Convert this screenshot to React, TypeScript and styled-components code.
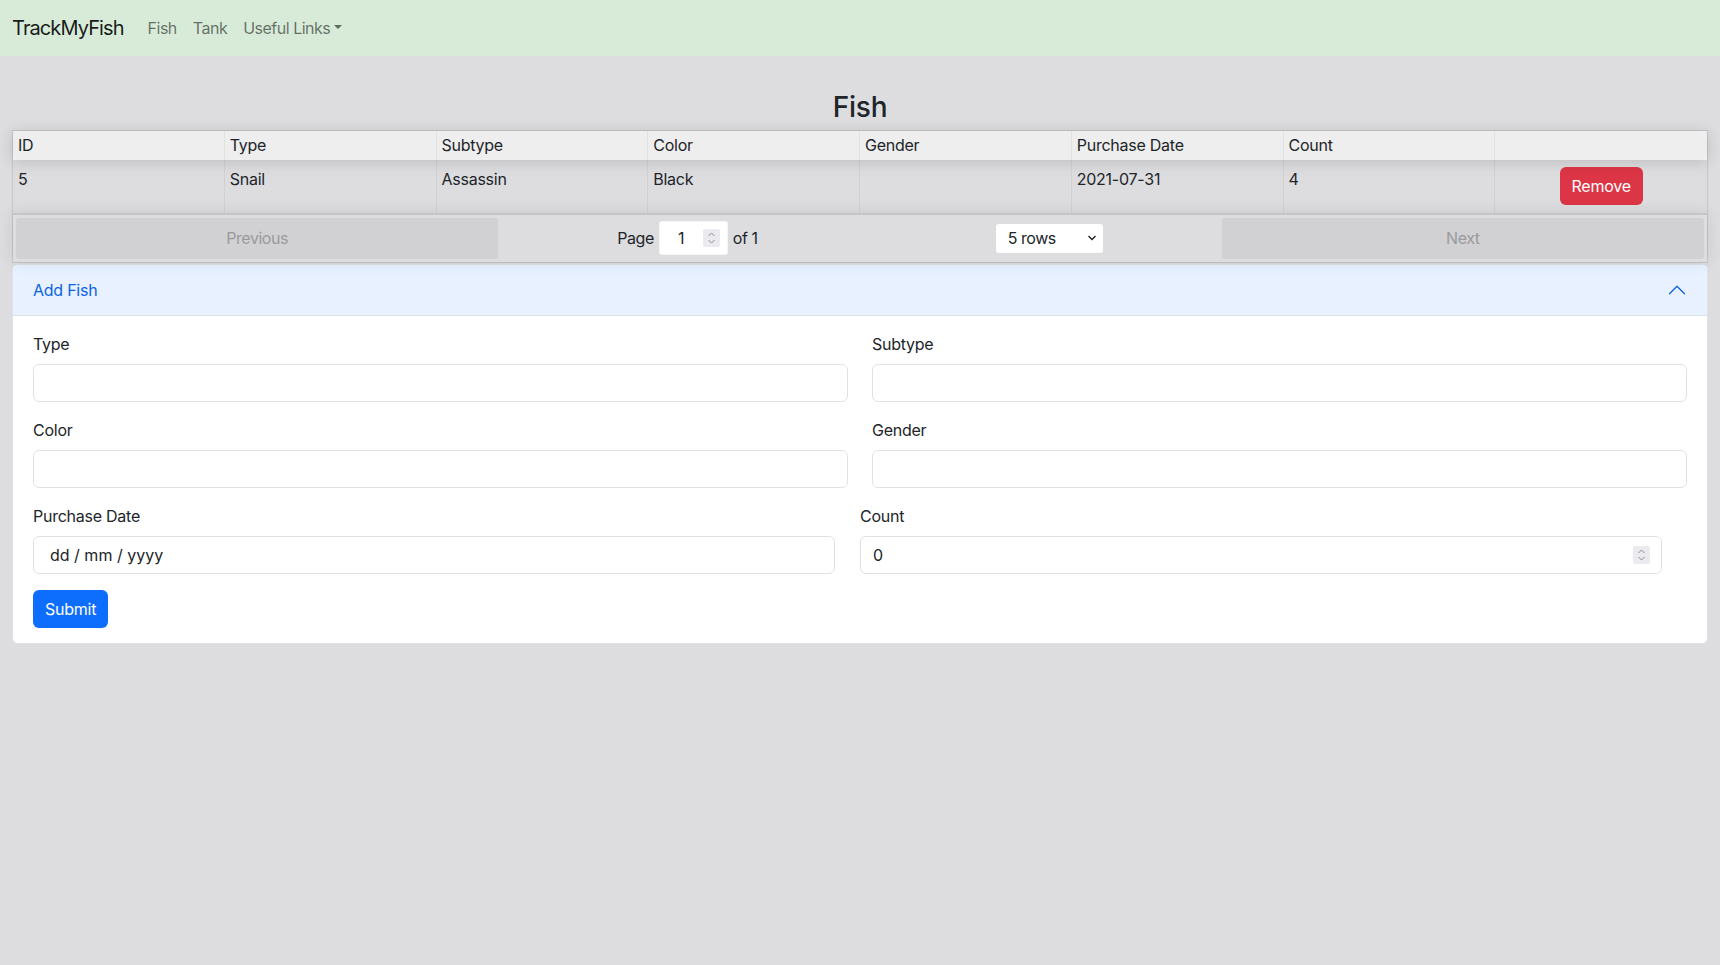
import React from "react";
import styled, { createGlobalStyle } from "styled-components";

const GlobalStyle = createGlobalStyle`
  * { box-sizing: border-box; }
  body {
    margin: 0;
    background: #dddde0;
    font-family: Inter, "Noto Sans", "Liberation Sans", sans-serif;
    font-size: 16px;
    line-height: 1.5;
    color: #212529;
    letter-spacing: -0.25px;
  }
`;

const Navbar = styled.nav`
  height: 56px;
  background: #d7ebd8;
  display: flex;
  align-items: center;
  padding: 0 12px;
  letter-spacing: -0.5px;
`;

const Brand = styled.a`
  font-size: 20px;
  color: rgba(0, 0, 0, 0.9);
  margin-right: 16px;
  text-decoration: none;
  letter-spacing: -0.9px;
`;

const NavLink = styled.a`
  padding: 8px;
  color: rgba(0, 0, 0, 0.55);
  text-decoration: none;
  font-size: 16px;
  display: inline-flex;
  align-items: center;
`;

const Caret = styled.span`
  display: inline-block;
  margin-left: 4px;
  width: 0;
  height: 0;
  border-top: 4.8px solid rgba(0, 0, 0, 0.55);
  border-left: 4.8px solid transparent;
  border-right: 4.8px solid transparent;
  transform: translateY(-1px);
`;

const Container = styled.main`
  padding: 0 12px;
`;

const Title = styled.h3`
  text-align: center;
  font-size: 28px;
  font-weight: 500;
  line-height: 1.2;
  margin: 35px 0 5px;
`;

const Table = styled.div`
  border: 1px solid rgba(0, 0, 0, 0.1);
`;

const HeaderRow = styled.div`
  display: grid;
  grid-template-columns: repeat(8, 1fr);
  height: 29px;
  background: #eeeeee;
  box-shadow: 0 2px 15px 0 rgba(0, 0, 0, 0.15);
  position: relative;
  z-index: 1;
`;

const HeadCell = styled.div`
  display: flex;
  align-items: center;
  padding: 0 5px;
  border-right: 1px solid rgba(0, 0, 0, 0.05);
  &:last-child { border-right: none; }
`;

const DataRow = styled.div`
  display: grid;
  grid-template-columns: repeat(8, 1fr);
  height: 53px;
`;

const Cell = styled.div<{ $center?: boolean }>`
  padding: 7px 5px;
  border-right: 1px solid rgba(0, 0, 0, 0.05);
  display: flex;
  align-items: flex-start;
  justify-content: ${(p) => (p.$center ? "center" : "flex-start")};
  &:last-child { border-right: none; }
`;

const Btn = styled.button<{ $variant: "danger" | "primary" }>`
  height: 38px;
  padding: 6px 12px;
  border: none;
  border-radius: 6px;
  font: inherit;
  font-size: 16px;
  letter-spacing: -0.25px;
  color: #fff;
  background: ${(p) => (p.$variant === "danger" ? "#dc3545" : "#0d6efd")};
  cursor: pointer;
`;

const Pagination = styled.div`
  display: grid;
  grid-template-columns: minmax(0, 1fr) minmax(0, 1.5fr) minmax(0, 1fr);
  padding: 3px;
  border-top: 2px solid rgba(0, 0, 0, 0.1);
  box-shadow: 0 0 15px 0 rgba(0, 0, 0, 0.1);
  position: relative;
  letter-spacing: -0.45px;
`;

const PageBtn = styled.button`
  height: 41px;
  border: none;
  border-radius: 3px;
  background: #d1d1d4;
  color: #9a9a9c;
  font: inherit;
  font-size: 16px;
  letter-spacing: inherit;
`;

const PageCenter = styled.div`
  display: flex;
  align-items: center;
  justify-content: space-around;
`;

const PageInfo = styled.div`
  margin: 3px 10px;
  display: flex;
  align-items: center;
  gap: 5px;
`;

const NumberBox = styled.div<{ $small?: boolean }>`
  display: flex;
  align-items: center;
  background: #fff;
  height: ${(p) => (p.$small ? "34px" : "38px")};
  width: ${(p) => (p.$small ? "69px" : "auto")};
  border: 1px solid ${(p) => (p.$small ? "rgba(0,0,0,0.04)" : "#dee2e6")};
  border-radius: ${(p) => (p.$small ? "3px" : "6px")};
  padding: ${(p) => (p.$small ? "0 7px 0 0" : "0 11px 0 12px")};
`;

const BareInput = styled.input<{ $center?: boolean }>`
  flex: 1;
  min-width: 0;
  border: none;
  outline: none;
  background: transparent;
  font: inherit;
  font-size: 16px;
  color: #212529;
  text-align: ${(p) => (p.$center ? "center" : "left")};
  padding: 0;
`;

const RowsSelect = styled.div`
  margin: 3px 10px;
  width: 107px;
  height: 29px;
  background: #fff;
  border-radius: 3px;
  display: flex;
  align-items: center;
  justify-content: space-between;
  padding: 0 6px 0 12px;
`;

const Accordion = styled.section`
  margin-top: 1px;
  border: 1px solid #dee2e6;
  border-radius: 6px;
  background: #fff;
  overflow: hidden;
`;

const AccordionHeader = styled.div`
  height: 51px;
  background: #e7f1ff;
  color: #0c63e4;
  display: flex;
  align-items: center;
  justify-content: space-between;
  padding: 0 20px;
  box-shadow: inset 0 -1px 0 #dee2e6;
`;

const AccordionBody = styled.form`
  padding: 16px 20px 15px;
`;

const FieldRow = styled.div<{ $narrow?: boolean }>`
  display: grid;
  grid-template-columns: ${(p) => (p.$narrow ? "802px 802px" : "1fr 1fr")};
  column-gap: ${(p) => (p.$narrow ? "25px" : "24px")};
`;

const Field = styled.div`
  margin-bottom: 16px;
  display: flex;
  flex-direction: column;
`;

const Label = styled.label`
  margin-bottom: 8px;
  line-height: 24px;
`;

const TextInput = styled.input<{ $indent?: boolean }>`
  height: 38px;
  border: 1px solid #dee2e6;
  border-radius: 6px;
  padding: 6px 12px 6px ${(p) => (p.$indent ? "16px" : "12px")};
  font: inherit;
  font-size: 16px;
  color: #212529;
  background: #fff;
  &::placeholder { color: #212529; }
`;

const Spinner = () => (
  <svg width="17" height="18" viewBox="0 0 17 18">
    <rect x="0" y="0" width="17" height="18" rx="2" fill="#ebebef" />
    <path d="M5.5 7 L8.5 4 L11.5 7" stroke="#8d8d92" strokeWidth="1" fill="none" />
    <path d="M5.5 11 L8.5 14 L11.5 11" stroke="#8d8d92" strokeWidth="1" fill="none" />
  </svg>
);

const ChevronDown = () => (
  <svg width="10" height="8" viewBox="0 0 10 8">
    <path d="M1.5 2 L5 5.5 L8.5 2" stroke="#222" strokeWidth="1.4" fill="none" />
  </svg>
);

const ChevronUp = () => (
  <svg width="20" height="20" viewBox="0 0 16 16" fill="#0c63e4">
    <g transform="rotate(180 8 8)">
      <path d="M1.646 4.646a.5.5 0 0 1 .708 0L8 10.293l5.646-5.647a.5.5 0 0 1 .708.708l-6 6a.5.5 0 0 1-.708 0l-6-6a.5.5 0 0 1 0-.708z" />
    </g>
  </svg>
);

const headers = ["ID", "Type", "Subtype", "Color", "Gender", "Purchase Date", "Count", ""];
const row = ["5", "Snail", "Assassin", "Black", "", "2021-07-31", "4"];

export default function App() {
  return (
    <>
      <GlobalStyle />
      <Navbar>
        <Brand href="#">TrackMyFish</Brand>
        <NavLink href="#">Fish</NavLink>
        <NavLink href="#">Tank</NavLink>
        <NavLink href="#">
          Useful Links
          <Caret />
        </NavLink>
      </Navbar>
      <Container>
        <Title>Fish</Title>
        <Table>
          <HeaderRow>
            {headers.map((h, i) => (
              <HeadCell key={i}>{h}</HeadCell>
            ))}
          </HeaderRow>
          <DataRow>
            {row.map((c, i) => (
              <Cell key={i}>{c}</Cell>
            ))}
            <Cell $center>
              <Btn $variant="danger" type="button">Remove</Btn>
            </Cell>
          </DataRow>
          <Pagination>
            <PageBtn disabled>Previous</PageBtn>
            <PageCenter>
              <PageInfo>
                <span>Page</span>
                <NumberBox $small>
                  <BareInput $center defaultValue="1" />
                  <Spinner />
                </NumberBox>
                <span>of 1</span>
              </PageInfo>
              <RowsSelect>
                <span>5 rows</span>
                <ChevronDown />
              </RowsSelect>
            </PageCenter>
            <PageBtn disabled>Next</PageBtn>
          </Pagination>
        </Table>
        <Accordion>
          <AccordionHeader>
            <span>Add Fish</span>
            <ChevronUp />
          </AccordionHeader>
          <AccordionBody onSubmit={(e) => e.preventDefault()}>
            <FieldRow>
              <Field>
                <Label>Type</Label>
                <TextInput />
              </Field>
              <Field>
                <Label>Subtype</Label>
                <TextInput />
              </Field>
            </FieldRow>
            <FieldRow>
              <Field>
                <Label>Color</Label>
                <TextInput />
              </Field>
              <Field>
                <Label>Gender</Label>
                <TextInput />
              </Field>
            </FieldRow>
            <FieldRow $narrow>
              <Field>
                <Label>Purchase Date</Label>
                <TextInput $indent placeholder="dd / mm / yyyy" />
              </Field>
              <Field>
                <Label>Count</Label>
                <NumberBox>
                  <BareInput defaultValue="0" />
                  <Spinner />
                </NumberBox>
              </Field>
            </FieldRow>
            <Btn $variant="primary" type="submit">Submit</Btn>
          </AccordionBody>
        </Accordion>
      </Container>
    </>
  );
}
